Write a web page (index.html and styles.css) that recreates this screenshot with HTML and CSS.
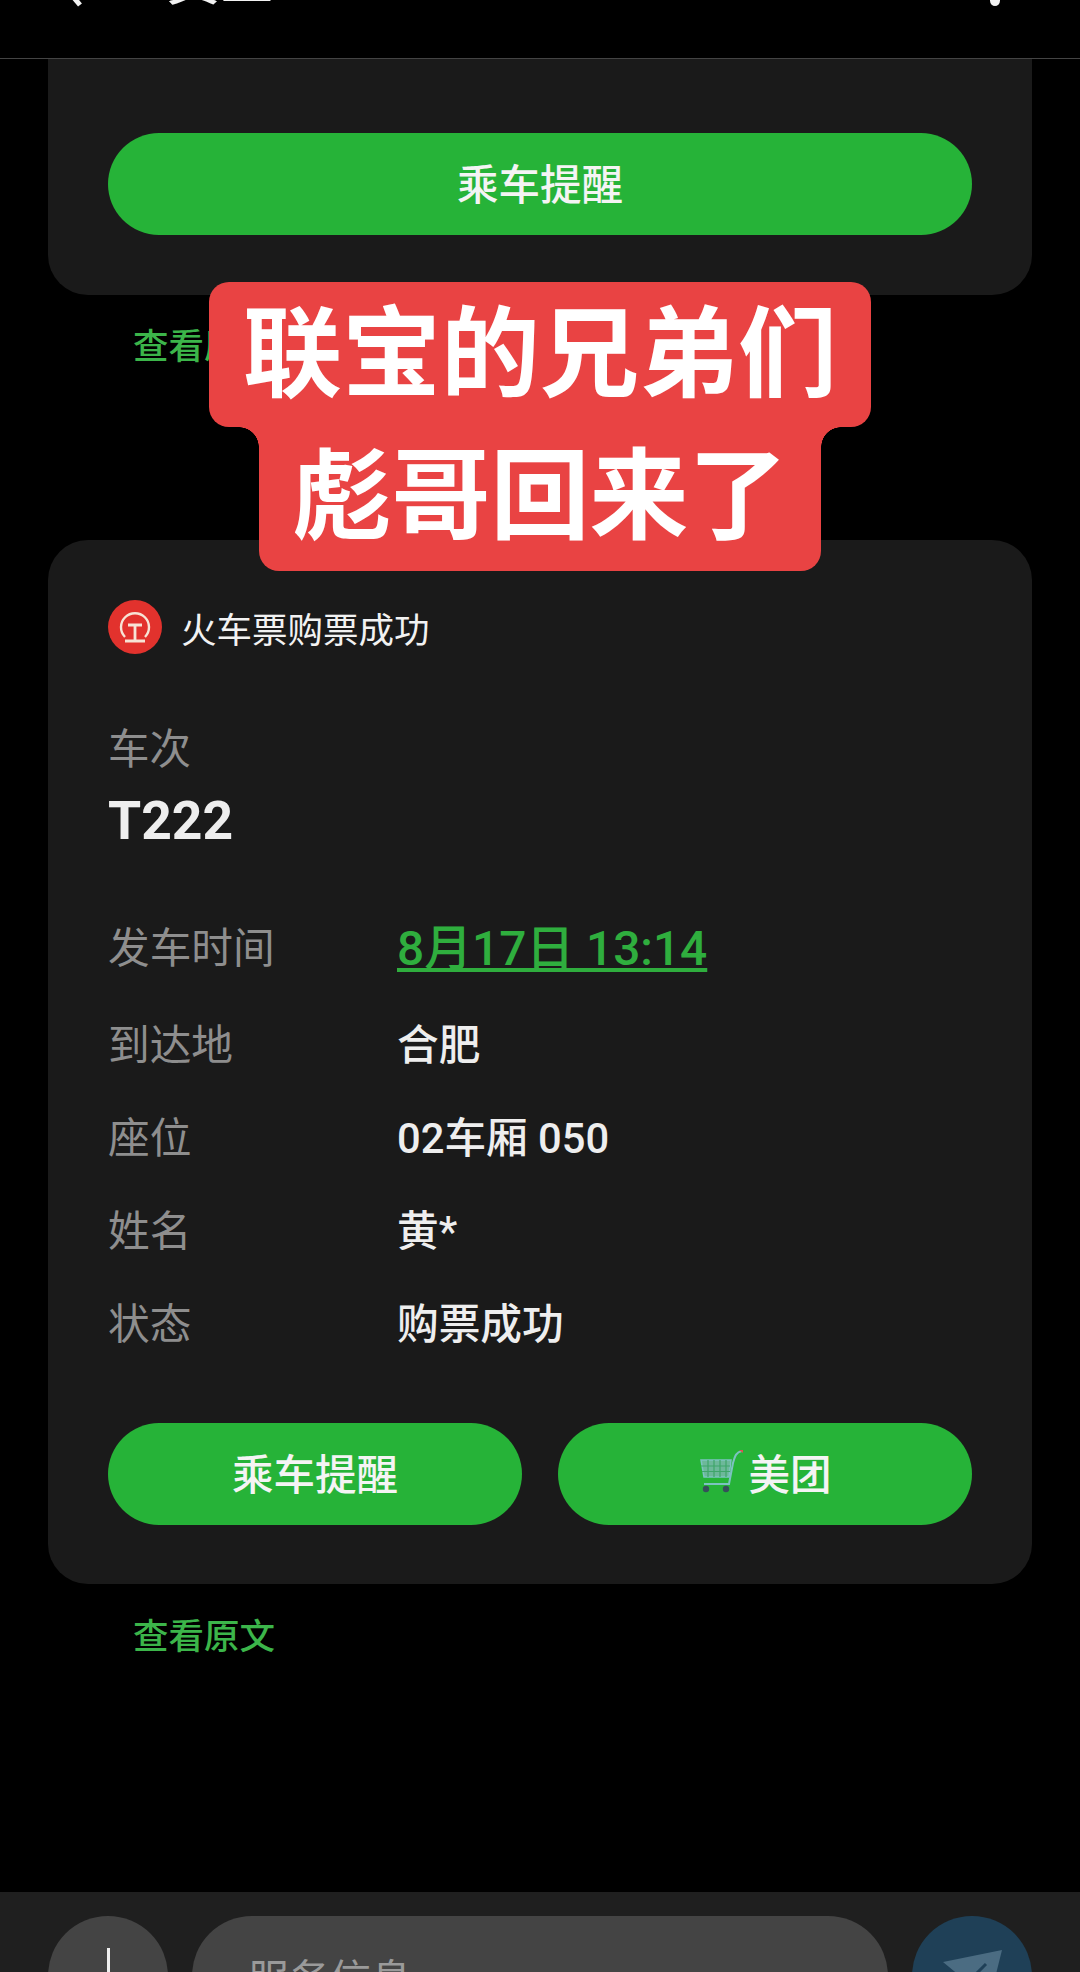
FILE: index.html
```html
<!DOCTYPE html>
<html lang="zh-CN">
<head>
    <meta charset="UTF-8">
    <meta name="viewport" content="width=device-width, initial-scale=1.0">
    <title>火车票购票成功</title>
    <link rel="stylesheet" href="styles.css">
</head>
<body>
    <header class="top-bar">
        <svg class="back-icon" width="40" height="60" viewBox="0 0 40 60"><path d="M28 6 L8 30" /><path d="M8 30 L28 54" /></svg>
        <span class="top-title">黄三</span>
        <span class="top-dot"></span>
    </header>

    <main class="messages">
        <section class="card card-cut">
            <button class="pill">乘车提醒</button>
        </section>
        <a class="source-link">查看原文</a>

        <section class="card card-ticket">
            <div class="card-head">
                <!-- 12306 logo -->
                <svg class="rail-logo" width="54" height="54" viewBox="0 0 54 54">
                    <circle cx="27" cy="27" r="27" fill="#e2322d" />
                    <path d="M17 37 A14 14 0 1 1 37 37" fill="none" stroke="#f7e3d5" stroke-width="2.4" />
                    <path d="M20 25 H34 M27 25 V40 M17 41 H37" fill="none" stroke="#f7e3d5" stroke-width="2.8" />
                </svg>
                <span class="card-title">火车票购票成功</span>
            </div>

            <div class="train">
                <div class="train-label">车次</div>
                <div class="train-no">T222</div>
            </div>

            <dl class="rows">
                <div class="row row-first"><dt>发车时间</dt><dd class="date-link">8月17日 13:14</dd></div>
                <div class="row"><dt>到达地</dt><dd>合肥</dd></div>
                <div class="row"><dt>座位</dt><dd>02车厢 050</dd></div>
                <div class="row"><dt>姓名</dt><dd>黄*</dd></div>
                <div class="row"><dt>状态</dt><dd>购票成功</dd></div>
            </dl>

            <div class="actions">
                <button class="pill">乘车提醒</button>
                <button class="pill">
                    <svg class="cart-icon" width="46" height="46" viewBox="0 0 46 46">
                        <path d="M3 11 H33 L31 28 H6 Z" fill="#6db89a" stroke="#7cc3c0" stroke-width="1.5" />
                        <path d="M3 17 H32 M4 22.5 H32 M10 11 V28 M16 11 V28 M22 11 V28 M28 11 V28" stroke="#3fa56a" stroke-width="1.2" />
                        <path d="M44 2 C38 3 37 7 35 14 L31 35 H6" fill="none" stroke="#7cc3c0" stroke-width="2" />
                        <path d="M41 1 L45 1 L45 4 Z" fill="#d9534f" />
                        <circle cx="8" cy="40" r="3.2" fill="#35505a" />
                        <circle cx="28" cy="40" r="3.2" fill="#35505a" />
                    </svg>
                    美团
                </button>
            </div>
        </section>
        <a class="source-link">查看原文</a>
    </main>

    <footer class="composer">
        <div class="round-btn add-btn"><span class="add-bar"></span></div>
        <div class="input-box">服务信息</div>
        <div class="round-btn send-btn">
            <svg width="64" height="64" viewBox="0 0 64 64">
                <path d="M3 16 L62 4 L48 60 L36 36 L22 48 L20 30 Z" fill="#4b6c82" />
                <path d="M46 18 L34 30" stroke="#1f4057" stroke-width="3" />
            </svg>
        </div>
    </footer>

    <!-- caption sticker over the chat -->
    <div class="sticker">
        <div class="sticker-line">联宝的兄弟们</div>
        <div class="sticker-line sticker-line-2">彪哥回来了</div>
    </div>
</body>
</html>
```

FILE: styles.css
```css
* {
    box-sizing: border-box;
}

html, body {
    margin: 0;
    padding: 0;
}

body {
    position: relative;
    width: 1080px;
    height: 1972px;
    overflow: hidden;
    display: flex;
    flex-direction: column;
    background-color: #000;
    color: #f2f2f2;
    font-family: Roboto, "Noto Sans CJK SC", sans-serif;
}

.top-bar {
    position: relative;
    flex: none;
    height: 59px;
    overflow: hidden;
    border-bottom: 1px solid #444;
}

.back-icon {
    position: absolute;
    left: 52px;
    top: -49px;
    fill: none;
    stroke: #f2f2f2;
    stroke-width: 5;
}

.top-title {
    position: absolute;
    left: 166px;
    top: -48px;
    font-size: 54px;
    line-height: 60px;
    font-weight: 500;
}

.top-dot {
    position: absolute;
    left: 990px;
    top: -5px;
    width: 10px;
    height: 11px;
    border-radius: 50%;
    background-color: #f2f2f2;
}

.messages {
    flex: 1;
    padding: 0 48px;
}

.card {
    background-color: #1a1a1a;
    border-radius: 40px;
    padding: 0 60px;
}

.card-cut {
    height: 236px;
    padding-top: 74px;
    border-radius: 0 0 40px 40px;
}

.pill {
    display: flex;
    align-items: center;
    justify-content: center;
    width: 100%;
    height: 102px;
    padding: 0 0 4px;
    border: none;
    border-radius: 51px;
    background-color: #26b338;
    color: #f4f4f4;
    font-family: inherit;
    font-size: 41.5px;
    font-weight: 500;
}

.source-link {
    display: block;
    height: 245px;
    padding: 32px 0 0 85px;
    color: #3cb54a;
    font-size: 35.5px;
    font-weight: 500;
    line-height: 40px;
}

.card-ticket {
    height: 1044px;
    padding-top: 60px;
}

.source-link:last-child {
    height: auto;
    padding-top: 33px;
}

.card-head {
    display: flex;
    align-items: flex-start;
    gap: 19px;
}

.card-title {
    padding-top: 4px;
    font-size: 35.5px;
    line-height: 54px;
}

.train {
    margin-top: 64px;
}

.train-label {
    color: #8e8e8e;
    font-size: 41.5px;
    line-height: 56px;
}

.train-no {
    margin-top: 11px;
    font-size: 53.5px;
    line-height: 64px;
    font-weight: 700;
    color: #eee;
}

.rows {
    margin: 68px 0 0;
}

.row {
    display: flex;
    height: 93px;
    font-size: 41.7px;
    line-height: 56px;
}

.row-first {
    height: 97px;
}

dt {
    flex: none;
    width: 289px;
    color: #8e8e8e;
}

dd {
    margin: 0;
    color: #eee;
    font-weight: 500;
}

.date-link {
    color: #2fae3e;
    font-size: 47.8px;
    text-decoration: underline;
    text-underline-offset: 3px;
}

.actions {
    display: flex;
    gap: 36px;
    margin-top: 33px;
}

.cart-icon {
    margin-right: 4px;
}

.composer {
    flex: none;
    display: flex;
    gap: 24px;
    height: 80px;
    padding: 24px 48px 0;
    background-color: #1f1f1f;
}

.round-btn {
    position: relative;
    flex: none;
    width: 120px;
    height: 120px;
    border-radius: 50%;
}

.add-btn {
    background-color: #444;
}

.add-bar {
    display: block;
    width: 3px;
    height: 40px;
    margin: 32px auto 0;
    background-color: #eee;
}

.input-box {
    flex: 1;
    height: 120px;
    padding: 36px 56px 0;
    border-radius: 60px;
    background-color: #444;
    color: #9a9a9a;
    font-size: 41px;
    line-height: 56px;
}

.send-btn {
    background-color: #1f4057;
}

.send-btn svg {
    position: absolute;
    left: 28px;
    top: 30px;
}

.sticker {
    position: absolute;
    left: 209px;
    top: 282px;
    width: 662px;
    display: flex;
    flex-direction: column;
    align-items: center;
    color: #fff;
    font-size: 99px;
    font-weight: 700;
    text-align: center;
}

.sticker-line {
    position: relative;
    width: 100%;
    height: 145px;
    border-radius: 20px;
    background-color: #e94343;
    line-height: 146px;
}

.sticker-line-2 {
    width: 562px;
    height: 144px;
    border-radius: 0 0 20px 20px;
    line-height: 141px;
}

/* concave corners where the two lines meet */
.sticker-line-2::before,
.sticker-line-2::after {
    content: "";
    position: absolute;
    top: 0;
    width: 20px;
    height: 20px;
}

.sticker-line-2::before {
    left: -20px;
    background: radial-gradient(circle at 0 100%, transparent 19.5px, #e94343 20px);
}

.sticker-line-2::after {
    right: -20px;
    background: radial-gradient(circle at 100% 100%, transparent 19.5px, #e94343 20px);
}
```
